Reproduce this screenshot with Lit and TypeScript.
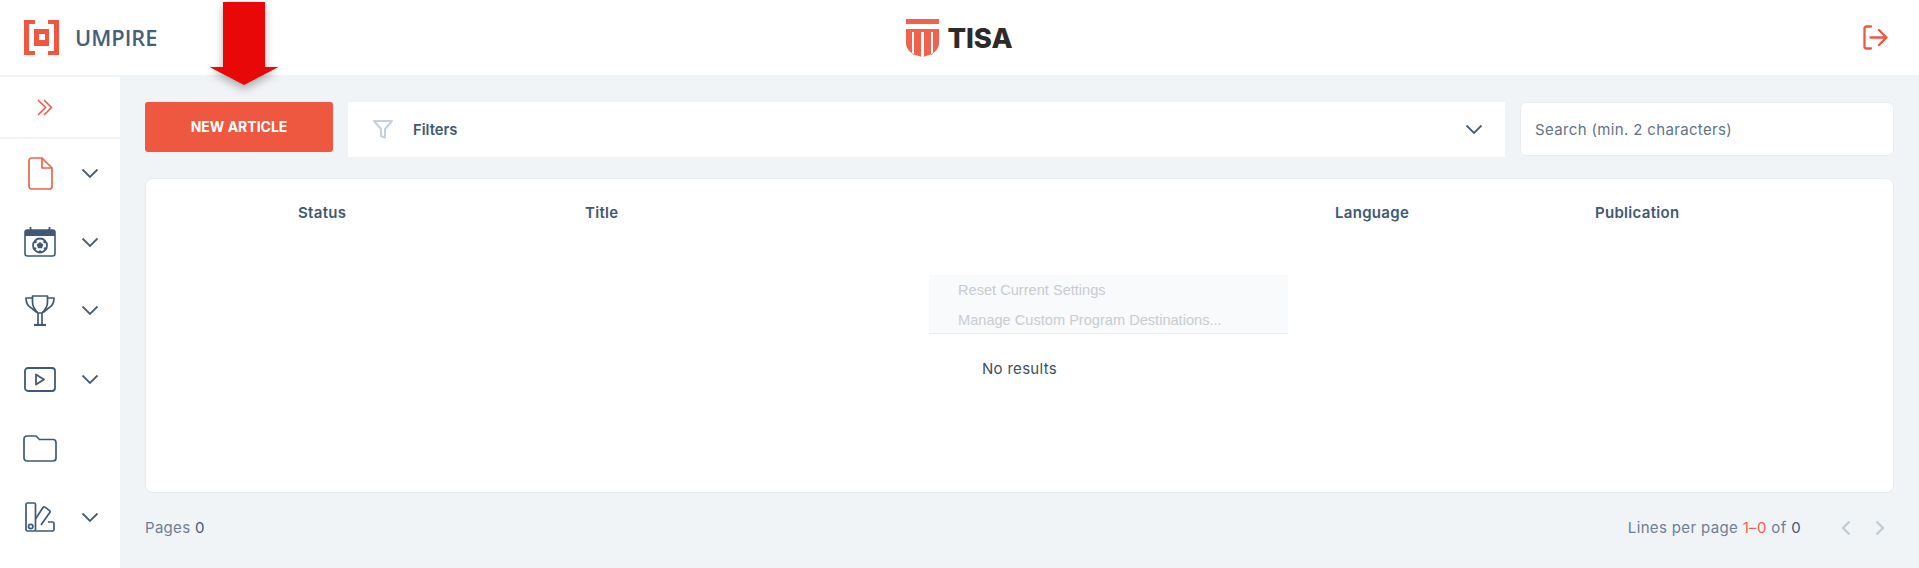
import { LitElement, html, css, svg } from "lit";
import { customElement } from "lit/decorators.js";

const chev = html`<svg class="chev" width="18" height="11" viewBox="0 0 18 11" fill="none" stroke="#47607a" stroke-width="1.8"><path d="M1.500 1.500 9 9l7.500-7.500"/></svg>`;

const nav = [
  { chevron: true, icon: svg`<svg width="25" height="33" viewBox="0 0 25 33" fill="none" stroke="#f0624d" stroke-width="1.700" stroke-linejoin="round"><path d="M3.500 1H14l10 10v18.500a2.500 2.500 0 0 1-2.500 2.500h-18A2.500 2.500 0 0 1 1 29.500v-26A2.500 2.500 0 0 1 3.500 1Z"/><path d="M14 1v10h10"/></svg>` },
  { chevron: true, icon: svg`<svg width="32" height="30" viewBox="0 0 32 30" fill="none"><rect x="1" y="3" width="30" height="26" rx="2.500" stroke="#3f5975" stroke-width="1.600"/><path d="M1 5.500A2.500 2.500 0 0 1 3.500 3h25A2.500 2.500 0 0 1 31 5.500V9H1Z" fill="#3f5975"/><path d="M6.500 0v4M25.500 0v4" stroke="#3f5975" stroke-width="1.800"/><circle cx="16" cy="18.500" r="7" stroke="#3f5975" stroke-width="1.800"/><path d="m16 15 3.300 2.400-1.300 3.800h-4l-1.300-3.800Z" fill="#3f5975"/><circle cx="11.500" cy="15" r="1.300" fill="#3f5975"/><circle cx="20.500" cy="15" r="1.300" fill="#3f5975"/><circle cx="11" cy="21.500" r="1.300" fill="#3f5975"/><circle cx="21" cy="21.500" r="1.300" fill="#3f5975"/><circle cx="16" cy="24.500" r="1.300" fill="#3f5975"/></svg>` },
  { chevron: true, icon: svg`<svg width="30" height="31" viewBox="0 0 30 31" fill="none" stroke="#3f5975" stroke-width="1.700" stroke-linejoin="round"><path d="M7.500 1h15v6c0 5-2.500 8-5.500 11h-4C10 15 7.500 12 7.500 7Z"/><path d="M7.500 3H1c0 6 3 9 6 10.500l5 4M22.500 3H29c0 6-3 9-6 10.500l-5 4"/><path d="M13 18v11M17 18v11"/><path d="M9 30h12" stroke-width="2.200"/></svg>` },
  { chevron: true, icon: svg`<svg width="32" height="25" viewBox="0 0 32 25" fill="none" stroke="#3f5975" stroke-width="1.800" stroke-linejoin="round"><rect x="1" y="1" width="30" height="23" rx="3"/><path d="M12 7.500 20 12.500l-8 5Z"/></svg>` },
  { chevron: false, icon: svg`<svg width="34" height="27" viewBox="0 0 34 27" fill="none" stroke="#3f5975" stroke-width="1.700" stroke-linejoin="round"><path d="M1 4a3 3 0 0 1 3-3h9l3.500 3.500H30a3 3 0 0 1 3 3V23a3 3 0 0 1-3 3H4a3 3 0 0 1-3-3Z"/></svg>` },
  { chevron: true, icon: svg`<svg width="30" height="30" viewBox="0 0 30 30" fill="none" stroke="#3f5975" stroke-width="1.700" stroke-linejoin="round"><rect x="1" y="1" width="9.500" height="28" rx="1.500"/><circle cx="5.700" cy="24.500" r="2.200"/><path d="M10.500 17 18 5.500a1.500 1.500 0 0 1 2-.4l4.500 3.500a1.500 1.500 0 0 1 .3 2L16 23"/><path d="M10.500 29H27.500a1.500 1.500 0 0 0 1.500-1.500v-6a1.500 1.500 0 0 0-1.500-1.500H23"/></svg>` },
];

@customElement("app-root")
export class AppRoot extends LitElement {
  static styles = css`
    :host { display: block; position: relative; width: 1919px; height: 568px; overflow: hidden; background: #f0f4f7; font-family: "Inter", "Open Sans", sans-serif; color: #3f5975; }
    .top { height: 75px; background: #fff; display: grid; grid-template-columns: 1fr auto 1fr; align-items: center; padding: 0 31px 0 24px; box-sizing: border-box; }
    .brand { display: flex; align-items: center; gap: 16px; font-size: 21.800px; font-weight: 600; color: #47607a; font-family: "Open Sans", sans-serif; }
    .tisa { display: flex; align-items: center; gap: 8px; margin-left: 7px; font-family: "Inter", sans-serif; font-weight: 800; font-size: 27.500px; color: #2e2a2a; padding-top: 1px; }
    .logout { justify-self: end; display: flex; }
    .body { display: flex; height: 493px; }
    .side { width: 120px; background: #fff; margin-top: 2px; flex: none; }
    .collapse { height: 60px; border-bottom: 2px solid #f0f4f7; display: flex; align-items: center; padding-left: 37px; }
    .nav { display: flex; flex-direction: column; }
    .nav-item { height: 68.800px; display: grid; grid-template-columns: 80px 20px; align-items: center; justify-items: center; }
    .nav-item .ic { display: flex; }
    .main { flex: 1; padding: 27px 25px 0; min-width: 0; }
    .tools { display: flex; align-items: flex-start; gap: 15px; }
    .btn { width: 188px; height: 50px; border-radius: 3px; background: #ee5740; color: #fff; display: flex; align-items: center; justify-content: center; padding-bottom: 2px; box-sizing: border-box; font-size: 14px; font-weight: 700; flex: none; }
    .filters { flex: 1; height: 55px; background: #fff; display: flex; align-items: center; padding: 0 22px 0 25px; font-size: 14.800px; font-weight: 600; }
    .filters .lbl { margin-left: 20px; flex: 1; }
    .search { width: 374px; height: 54px; box-sizing: border-box; background: #fff; border: 1px solid #e8edf1; border-radius: 6px; padding: 0 14px; display: flex; align-items: center; font-size: 15px; letter-spacing: .35px; color: #5f7388; flex: none; }
    .card { position: relative; margin-top: 21px; height: 315px; box-sizing: border-box; background: #fff; border: 1px solid #e8edf1; border-radius: 8px; }
    .head { display: grid; grid-template-columns: 287px 750px 260px 1fr; padding: 24px 0 0 152px; font-size: 15px; letter-spacing: .3px; font-weight: 600; line-height: 20px; }
    .empty { margin-top: 136px; text-align: center; font-size: 15px; letter-spacing: .3px; line-height: 20px; color: #3d4f60; }
    .ghost { position: absolute; left: 783px; top: 96px; width: 359px; height: 59px; background: #f9fafb; border-bottom: 1px solid #eceef0; box-sizing: border-box; padding: 0 29px; font-size: 14.600px; color: #c8cccf; font-family: "Liberation Sans", sans-serif; }
    .ghost div { height: 30px; line-height: 30px; }
    .foot { display: flex; justify-content: space-between; align-items: center; padding-top: 25px; font-size: 15px; letter-spacing: .3px; color: #6d8093; }
    .foot b { font-weight: 400; color: #3f5975; }
    .foot i { font-style: normal; color: #f0624d; }
    .pager { display: flex; align-items: center; letter-spacing: .35px; }
    .arrows { display: flex; gap: 24px; margin-left: 40px; margin-right: 9px; }
    .arrow { position: absolute; left: 209px; top: 0; filter: drop-shadow(0 4px 4px rgba(0,0,0,.3)); }
  `;

  render() {
    return html`
      <div class="top">
        <div class="brand">
          <svg width="35" height="35" viewBox="0 0 35 35" fill="#ef5741"><path d="M0 0h11v4H5v27h6v4H0ZM35 0H24v4h6v27h-6v4h11Z"/><path fill-rule="evenodd" d="M10 9h15v17H10Zm5 5v6h6v-6Z"/></svg>
          UMPIRE
        </div>
        <div class="tisa">
          <svg width="33" height="38" viewBox="0 0 33 38" fill="#f0624d"><path d="M0 0h33v5H0Z"/><path fill-rule="evenodd" d="M0 10h33v14c0 7-6 12-16.500 14C6 36 0 31 0 24Zm6 3v22l2 1V13Zm9 0v25h3V13Zm10 0v23l2-1V13Z"/></svg>
          TISA
        </div>
        <div class="logout">
          <svg width="25" height="25" viewBox="0 0 25 25" fill="none" stroke="#ef5741" stroke-width="2.300" stroke-linecap="round" stroke-linejoin="round"><path d="M8 1.500H3.500a2 2 0 0 0-2 2v18a2 2 0 0 0 2 2H8"/><path d="M7.500 12.500h16M16 5l7.500 7.500L16 20"/></svg>
        </div>
      </div>
      <div class="body">
        <aside class="side">
          <div class="collapse">
            <svg width="16" height="17" viewBox="0 0 16 17" fill="none" stroke="#ef5741" stroke-width="1.500"><path d="M1 1l7.500 7.500L1 16M7 1l7.500 7.500L7 16"/></svg>
          </div>
          <div class="nav">
            ${nav.map(n => html`<div class="nav-item"><span class="ic">${n.icon}</span>${n.chevron ? chev : ""}</div>`)}
          </div>
        </aside>
        <main class="main">
          <div class="tools">
            <div class="btn">NEW ARTICLE</div>
            <div class="filters">
              <svg width="20" height="19" viewBox="0 0 20 19" fill="none" stroke="#c5d0d8" stroke-width="2" stroke-linejoin="round"><path d="M1 1h18l-7 8v8.500l-4-1.500V9Z"/></svg>
              <span class="lbl">Filters</span>
              ${chev}
            </div>
            <div class="search">Search (min. 2 characters)</div>
          </div>
          <section class="card">
            <div class="head"><span>Status</span><span>Title</span><span>Language</span><span>Publication</span></div>
            <div class="empty">No results</div>
            <div class="ghost"><div>Reset Current Settings</div><div>Manage Custom Program Destinations...</div></div>
          </section>
          <div class="foot">
            <span>Pages <b>0</b></span>
            <span class="pager">
              <span>Lines per page <i>1–0</i> of <b>0</b></span>
              <span class="arrows">
                <svg width="10" height="16" viewBox="0 0 10 16" fill="none" stroke="#c2ccd4" stroke-width="2.400"><path d="M8.500 1.500 2 8l6.500 6.500"/></svg>
                <svg width="10" height="16" viewBox="0 0 10 16" fill="none" stroke="#c2ccd4" stroke-width="2.400"><path d="M1.500 1.500 8 8l-6.500 6.500"/></svg>
              </span>
            </span>
          </div>
        </main>
      </div>
      <svg class="arrow" width="70" height="88" viewBox="0 0 70 88"><path d="M14 2h42v65h13.500L35 85 .500 67H14Z" fill="#e80808"/></svg>
    `;
  }
}
